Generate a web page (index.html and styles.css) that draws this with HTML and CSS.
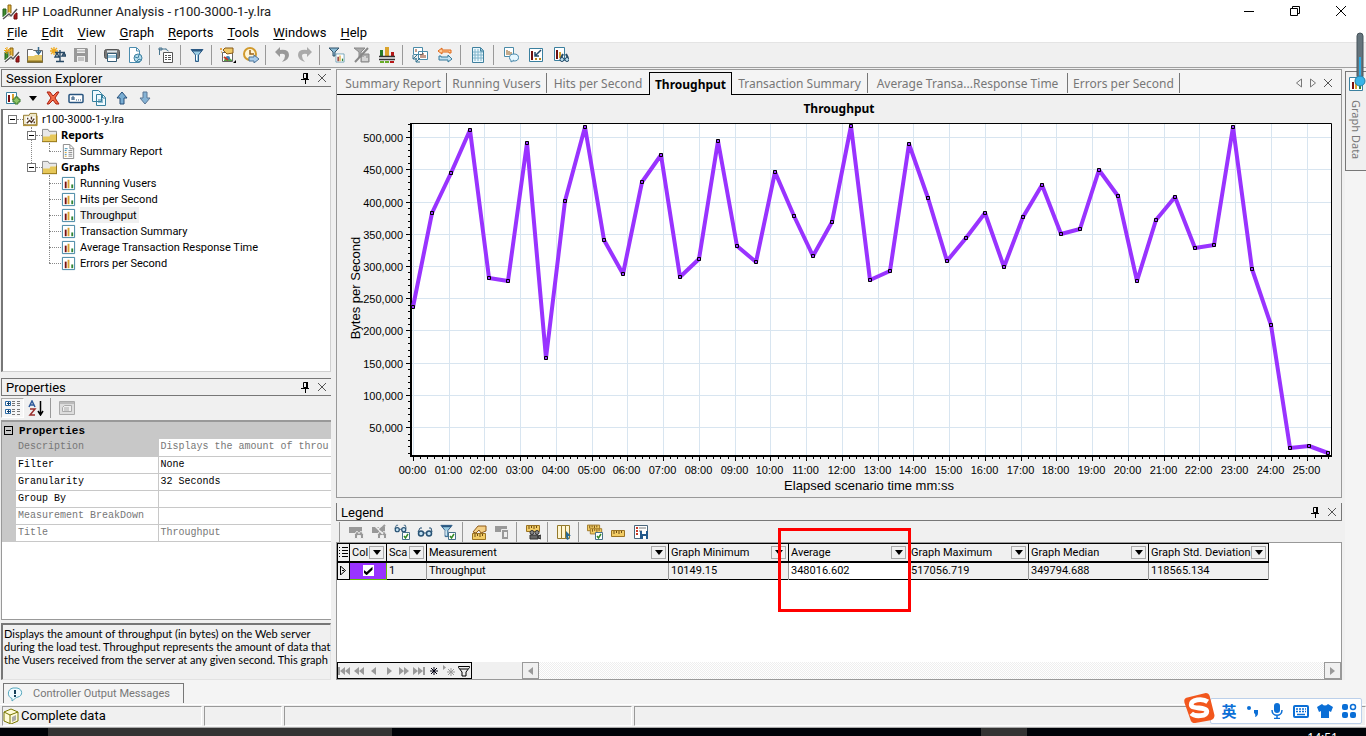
FILE: index.html
```html
<!DOCTYPE html>
<html lang="en">
<head>
<meta charset="utf-8">
<title>HP LoadRunner Analysis - r100-3000-1-y.lra</title>
<link rel="stylesheet" href="styles.css">
</head>
<body>
<svg class="sprite" aria-hidden="true">
  <symbol id="app" viewBox="0 0 16 16"><path d="M1 5h3v8H1z" fill="#3d8b2f" stroke="#225c1a"/><path d="M6 1h3v11H6z" fill="#e5b53a" stroke="#8a6513"/><path d="M12 9h3v6h-3z" fill="#a81b1b" stroke="#6e0c0c"/><path d="M1 15l6-5 2 2 6-7" fill="none" stroke="#fff" stroke-width="3"/><path d="M1 15l6-5 2 2 6-7" fill="none" stroke="#555" stroke-width="1.5"/></symbol>
  <symbol id="newapp" viewBox="0 0 16 16"><use href="#app"/><path d="M3 0v7M0 3.500h7M1 1l5 5M6 1L1 6" stroke="#f0a818"/></symbol>
  <symbol id="open" viewBox="0 0 16 16"><path d="M.5 2.500h5l1 1h9v12H.5z" fill="#fff" stroke="#666"/><path d="M1 9h6l1-1h7v6H1z" fill="#e6c868"/><path d="M0 14.500h16" stroke="#8d7423" stroke-width="2"/><path d="M11.500 0v6M9 4l2.500 3L14 4" fill="none" stroke="#3a6a8c" stroke-width="1.500"/></symbol>
  <symbol id="scale" viewBox="0 0 16 16"><path d="M4 0v8M0 4h8M1 1l6 6M7 1L1 7" stroke="#efaa20" stroke-width="1.300"/><path d="M10 3v11M5 5.500h10M6 14.500h8M7 6l-2 4h4zM14 6l-2 3h4z" fill="none" stroke="#294a66" stroke-width="1.400"/></symbol>
  <symbol id="save" viewBox="0 0 16 16"><path d="M1 1h13l1 1v13H1z" fill="#999"/><path d="M4 2h8v4H4zM4 9h8v6H4z" fill="#eee"/><path d="M5 11h6M5 13h6M4 4h8" stroke="#999"/></symbol>
  <symbol id="print" viewBox="0 0 16 16"><rect x=".5" y="2.500" width="15" height="9" rx="2" fill="#777" stroke="#555"/><path d="M3.500 6.500h9v8h-9z" fill="#fff" stroke="#355c75"/><path d="M3 4.500h10" stroke="#dfe8ee" stroke-width="2"/><path d="M4 8h8v3H4z" fill="#9cc5da"/></symbol>
  <symbol id="docweb" viewBox="0 0 16 16"><path d="M2.500.500h7l3 3v12h-10z" fill="#fff" stroke="#4b8cae"/><path d="M9.500 1v3h3" fill="none" stroke="#4b8cae"/><circle cx="11" cy="11" r="4" fill="#b5dded" stroke="#3c7f9f"/><path d="M8 10l3 1 1-3M10 14l2-2 2 1" fill="none" stroke="#3c7f9f"/></symbol>
  <symbol id="copylist" viewBox="0 0 16 16"><path d="M1.500 8V2h7M1 1h3v2H1zM7.500 2l3 2" fill="none" stroke="#4a7790"/><path d="M5.500 5.500h9v10h-9z" fill="#fff" stroke="#555"/><path d="M7 8.500h2M7 10.500h2M7 12.500h2M10 8.500h3M10 10.500h3M10 12.500h3" stroke="#555"/></symbol>
  <symbol id="funnel" viewBox="0 0 16 16"><path d="M2 2.500h12L9.500 8v6.500h-3V8z" fill="#9acbe2" stroke="#2e5d88"/><path d="M3 3.500h10" stroke="#2a5780" stroke-width="2"/><path d="M7.500 8v5" stroke="#fff"/></symbol>
  <symbol id="pic" viewBox="0 0 16 16"><path d="M2.500 5.500h10v9h-10z" fill="#fff" stroke="#666"/><path d="M4 13l3-4 5 4v1H4z" fill="#53a447"/><circle cx="8" cy="11" r="2" fill="#397dba"/><path d="M4 10l4 3" stroke="#c73524" stroke-width="2"/><path d="M3 3l2-2h8v5L7 7z" fill="#efc969" stroke="#875915"/><path d="M1 1v2M0 2h2M1 5h1" stroke="#e0921e"/><path d="M16 13v3h-3z"/></symbol>
  <symbol id="clock" viewBox="0 0 16 16"><circle cx="7" cy="7" r="6" fill="#fff6d8" stroke="#d19a2d" stroke-width="2"/><path d="M7 3v4h4" fill="none" stroke="#9c641a" stroke-width="1.500"/><path d="M6 10h5V8l5 4-5 4v-2H6z" fill="#a9cdec" stroke="#4d7499"/></symbol>
  <symbol id="undo" viewBox="0 0 16 16"><path d="M6 0L1 5l5 5V7q5-1 5 2 0 3-3 6 7-2 7-7 0-6-9-5z" fill="#999"/></symbol>
  <symbol id="redo" viewBox="0 0 16 16"><path d="M10 0l5 5-5 5V7Q5 6 5 9q0 3 3 6-7-2-7-7 0-6 9-5z" fill="#aaa"/></symbol>
  <symbol id="chart" viewBox="0 0 16 16"><path d="M1.500 1.500h13v13h-13z" fill="#fff" stroke="#3b809f"/><path d="M4 6h2v7H4z" fill="#7b1010"/><path d="M7 4h2v9H7z" fill="#d9a231"/><path d="M11 9h2v4h-2z" fill="#308437"/></symbol>
  <symbol id="fchart" viewBox="0 0 16 16"><path d="M0 1h10L6 5v4H4V5z" fill="#8bbbd5" stroke="#31536b"/><use href="#chart" x="6" y="6" width="10" height="10"/></symbol>
  <symbol id="fclear" viewBox="0 0 16 16"><path d="M0 1h11L7 5v5H5V5zM7 7h8v8H7z" fill="#aaa" stroke="#888"/><path d="M9 10v4M11 9v5M13 11v3" stroke="#fff"/><path d="M1 15L14 1" stroke="#888" stroke-width="2"/></symbol>
  <symbol id="bars" viewBox="0 0 16 16"><path d="M1 3h3v6H1z" fill="#287b24"/><path d="M6 0h4v9H6z" fill="#dba42c"/><path d="M12 5h3v4h-3z" fill="#b61818"/><path d="M0 9.500h16M0 12.500h16" stroke="#333" stroke-width="1.500"/><path d="M1 14h4v2H1zM6 14h4v2H6z" fill="#68ad28"/><path d="M11 14h4v2h-4z" fill="#b61818"/></symbol>
  <symbol id="drill" viewBox="0 0 16 16"><path d="M1.500.500h9v7h-9zM6.500 4.500h9v8h-9z" fill="#fff" stroke="#4a8ba8"/><path d="M9 11V7M11 11V6M13 11V8M4 5V2" stroke="#8a3a18"/><path d="M1 8v4h4M1 12l4-4M8 15H4v-4M8 11l-4 4" stroke="#33738f" fill="none"/></symbol>
  <symbol id="swap" viewBox="0 0 16 16"><path d="M14 6V3H5V1L1 4l4 3V5h7v1z" fill="#ffc995" stroke="#df6818"/><path d="M2 9v4h9v2l4-3-4-4v2H4V9z" fill="#c1e0f1" stroke="#367b9c"/></symbol>
  <symbol id="gridpage" viewBox="0 0 16 16"><path d="M2.500.500h8l3 3v12h-11z" fill="#e9f7fd" stroke="#3f809e"/><path d="M3 5h10M3 8h10M3 11h10M5 2v12M8 2v12M11 4v10" stroke="#80b4ca"/><path d="M10.500 1v3h3" fill="#9cc8db" stroke="#3f809e"/></symbol>
  <symbol id="comment" viewBox="0 0 16 16"><path d="M1.500.500h9v9h-9z" fill="#fff" stroke="#4a8ba8"/><path d="M4 8V3M6 8V4M8 8V5" stroke="#8a5618"/><ellipse cx="11" cy="10.500" rx="4.500" ry="3.500" fill="#e6f7ff" stroke="#4b8cae"/><path d="M8 13v2l3-2" fill="#fff" stroke="#4b8cae"/></symbol>
  <symbol id="arrowchart" viewBox="0 0 16 16"><path d="M1.500 1.500h13v13h-13z" fill="#fff" stroke="#3b809f"/><path d="M4 4v9" stroke="#701010" stroke-width="2"/><path d="M13 3L7 9M7 5v4h4" fill="none" stroke="#23496a" stroke-width="1.500"/><path d="M7 12h2M11 12h2" stroke="#b88720" stroke-width="2"/></symbol>
  <symbol id="searchchart" viewBox="0 0 16 16"><path d="M1.500.500h10v13h-10z" fill="#fff" stroke="#3b809f"/><path d="M4 12V3" stroke="#701010" stroke-width="2"/><path d="M7 11V5" stroke="#d4a02a" stroke-width="2"/><path d="M8 11l2-4M15 11l-2-4" stroke="#284c66" stroke-width="2"/><circle cx="9" cy="12.500" r="2" fill="#b8deef" stroke="#234764"/><circle cx="14" cy="12.500" r="2" fill="#b8deef" stroke="#234764"/></symbol>
  <symbol id="addchart" viewBox="0 0 16 16"><path d="M1.500 2.500h10v11h-10z" fill="#fff" stroke="#3b809f"/><path d="M4 5v7" stroke="#7b1010" stroke-width="2"/><path d="M8 4v6" stroke="#d9a231" stroke-width="2"/><path d="M8 9h2V7h3v2h2v3h-2v2h-3v-2H8z" fill="#8fc465" stroke="#39792c"/></symbol>
  <symbol id="delete" viewBox="0 0 16 16"><path d="M2 2h3l3 4 4-4h2l-4 6 4 6h-3l-3-4-4 4H2l4-6z" fill="#f16c47" stroke="#ab1f12"/></symbol>
  <symbol id="rename" viewBox="0 0 16 16"><rect x="1" y="4.500" width="14" height="8" rx="1" fill="#fff" stroke="#28547f" stroke-width="1.500"/><path d="M4 10V7h2v3M4 9h2M8 10h1M10 10h1M12 10h1" stroke="#28547f" fill="none"/></symbol>
  <symbol id="copy" viewBox="0 0 16 16"><path d="M1.500.500h6l3 3v8h-9zM5.500 4.500h6l3 3v8h-9z" fill="#effaff" stroke="#36809e"/><path d="M11.500 5v3h3M7 10h5M7 12h5" fill="none" stroke="#36809e"/></symbol>
  <symbol id="up" viewBox="0 0 16 16"><path d="M8 2L3 8h3v6h4V8h3z" fill="#7aaed3" stroke="#254e7a"/></symbol>
  <symbol id="down" viewBox="0 0 16 16"><path d="M8 14L3 8h3V2h4v6h3z" fill="#86b3d5" stroke="#5a7695"/></symbol>
  <symbol id="pin" viewBox="0 0 10 12"><path d="M3.500 1.500h4v5h-4zM1 7.500h8M5.500 8v4" fill="none" stroke="#000"/><path d="M7 1v6" stroke="#000" stroke-width="2"/></symbol>
  <symbol id="close" viewBox="0 0 10 10"><path d="M1 1l8 8M9 1L1 9" stroke="currentColor" stroke-width="1"/></symbol>
  <symbol id="folder" viewBox="0 0 16 16"><path d="M.5 1.500h6l1 2h8v11H.5z" fill="#e8e8e8" stroke="#888"/><path d="M1 9h7l1-2h6v8H1z" fill="#e6c759"/><path d="M0 14.500h16M15.500 6v9" stroke="#987719"/></symbol>
  <symbol id="session" viewBox="0 0 16 16"><path d="M.5 3.500h6l1-2h7v12H.5z" fill="#eee7c8" stroke="#91772b"/><path d="M3 5h10v8H3z" fill="#fff"/><path d="M4 12l3-3 2 2 3-4M5 6v2M9 5v3M12 10v2" stroke="#523823" stroke-width="1.500" fill="none"/><path d="M0 14.500h15V4" stroke="#a7831f" fill="none"/></symbol>
  <symbol id="report" viewBox="0 0 16 16"><path d="M2.500.500h7l4 4v11h-11z" fill="#fff" stroke="#888"/><path d="M9.500 1v4h4M8 7h4M8 9h4M8 11h4M8 13h4" stroke="#888" fill="none"/><path d="M4 5h3M4 7h2M4 11h2" stroke="#3787ac"/><path d="M4 9h2M4 13h2" stroke="#d8a02a"/></symbol>
  <symbol id="cats" viewBox="0 0 16 16"><path d="M.5 1.500h5v4h-5zM.5 9.500h5v4h-5z" fill="#fff" stroke="#2b6aa5"/><path d="M2 3.500h3M3.500 2v3M2 11.500h3M3.500 10v3" stroke="#123f6a"/><path d="M7 1.500h3M12 1.500h3M7 3.500h3M12 3.500h3M7 5.500h3M12 5.500h3M7 9.500h3M12 9.500h3M7 11.500h3M12 11.500h3M7 14.500h3M12 14.500h3" stroke="#777"/></symbol>
  <symbol id="sort" viewBox="0 0 16 16"><path d="M1 7l3-6 3 6M2 5h4" fill="none" stroke="#2e5a9b" stroke-width="1.500"/><path d="M2 9h5l-5 6h5" fill="none" stroke="#9b302e" stroke-width="1.500"/><path d="M12.500 1v13M10 11l2.500 4 2.500-4" fill="none" stroke="#000" stroke-width="1.500"/></symbol>
  <symbol id="page" viewBox="0 0 16 16"><path d="M.5 1.500h15v13H.5z" fill="#ddd" stroke="#aaa"/><path d="M1 3h14" stroke="#bbb" stroke-width="2"/><path d="M3.500 7.500l2-2h7v6h-9zM5 8h5M5 10h5" fill="#eee" stroke="#aaa"/></symbol>
  <symbol id="gmerge" viewBox="0 0 16 16"><path d="M1 3h13v6H1z" fill="#999"/><path d="M6.500 14.500v-4l2-3h1l1.500 2 1.500-2h1l2 3v4h-3v-3h-3v3z" fill="#999" stroke="#eee"/></symbol>
  <symbol id="gsplit" viewBox="0 0 16 16"><use href="#gmerge"/><path d="M7 5l6-5M2 0l10 10" stroke="#eee" stroke-width="1.500"/><path d="M9 6l5-5" stroke="#999" stroke-width="2"/></symbol>
  <symbol id="glasses" viewBox="0 0 16 16"><path d="M1 8L3 4h2M15 8l-1-4h-2" fill="none" stroke="#285274"/><circle cx="4" cy="9.500" r="2.500" fill="#c5e3f4" stroke="#285274" stroke-width="1.500"/><circle cx="12" cy="9.500" r="2.500" fill="#c5e3f4" stroke="#285274" stroke-width="1.500"/><path d="M6.500 9h3" stroke="#285274"/></symbol>
  <symbol id="ok" viewBox="0 0 8 8"><path d="M.5.500h7v7h-7z" fill="#fff" stroke="#47718a"/><path d="M2 4l1.500 2L6 2" fill="none" stroke="#338a26" stroke-width="1.500"/></symbol>
  <symbol id="glassesok" viewBox="0 0 16 16"><use href="#glasses" x="0" y="-2" width="13" height="13"/><use href="#ok" x="8" y="8" width="8" height="8"/></symbol>
  <symbol id="funnelok" viewBox="0 0 16 16"><use href="#funnel" x="-1" y="-1" width="15" height="15"/><use href="#ok" x="8" y="8" width="8" height="8"/></symbol>
  <symbol id="ruler" viewBox="0 0 16 16"><path d="M1.500 6.500h13v6h-13z" fill="#f2cc65" stroke="#9b7322"/><path d="M4 7v3M6.500 7v2M9 7v3M11.500 7v2" stroke="#6e4c13"/></symbol>
  <symbol id="rulerhand" viewBox="0 0 16 16"><use href="#ruler" y="3" width="16" height="16"/><path d="M2 8l5-6h8v5l-5 2-2-3-3 3z" fill="#f4cf84" stroke="#8e5b1b"/></symbol>
  <symbol id="gcopy" viewBox="0 0 16 16"><path d="M1 2h12v6H1z" fill="#999"/><path d="M7.500 5.500h7v10h-7z" fill="#999" stroke="#eee"/><path d="M10 8h3v5h-3z" fill="#eee"/></symbol>
  <symbol id="rulercam" viewBox="0 0 16 16"><use href="#ruler" y="-5" width="16" height="16"/><circle cx="7" cy="8.500" r="2" fill="#888" stroke="#333"/><circle cx="12" cy="8.500" r="2" fill="#888" stroke="#333"/><path d="M5 11h8v4H5zM13 12l3-1v4l-3-1z" fill="#666" stroke="#333"/></symbol>
  <symbol id="columns" viewBox="0 0 16 16"><path d="M1.500 1.500h4v13h-4zM5.500 1.500h4v13h-4zM9.500 1.500h4v13h-4z" fill="#fff6d1" stroke="#94792a"/><path d="M10 7l5 5h-3l1 3-2 1-1-3z" fill="#286b95"/></symbol>
  <symbol id="rulersok" viewBox="0 0 16 16"><use href="#ruler" x="-1" y="-5" width="15" height="15"/><use href="#ruler" x="2" y="-1" width="14" height="14"/><use href="#ok" x="8" y="8" width="8" height="8"/></symbol>
  <symbol id="saveset" viewBox="0 0 16 16"><path d="M1.500 1.500h13v13h-13z" fill="#fff" stroke="#4a657b"/><path d="M3 4h2M3 7h2M3 10h2" stroke="#c83824" stroke-width="2"/><path d="M6 4h7M6 7h3" stroke="#777"/><path d="M7 7h8v8H7z" fill="#24598b"/><path d="M9 7h4v3H9zM10 12h3v3h-3z" fill="#fff"/></symbol>
  <symbol id="cube" viewBox="0 0 16 16"><path d="M1 4l7-3 7 3v9l-7 3-7-3z" fill="#fffbd8" stroke="#777600"/><path d="M1 4l6 3v8M7 7l8-3" fill="none" stroke="#777600"/><path d="M9 9l4-2v5l-4 2z" fill="#aaa"/></symbol>
  <symbol id="bubble" viewBox="0 0 16 16"><path d="M5 12.500C0 11 0 3 6 2h4c6 1 6 8 1 9-3 1-2 1-6 4z" fill="#eefaff" stroke="#56a7bd"/><path d="M8 4v4M8 9v2" stroke="#143f5a" stroke-width="2"/></symbol>
</svg>

<header class="titlebar">
  <svg class="ico"><use href="#app"/></svg>
  <h1>HP LoadRunner Analysis - r100-3000-1-y.lra</h1>
  <div class="winbtns">
    <button aria-label="Minimize"><svg width="12" height="12"><path d="M1 6.500h10" stroke="#000"/></svg></button>
    <button aria-label="Restore"><svg width="12" height="12"><path d="M1.500 3.500h7v7h-7zM3.500 3V1.500h7v7H9" fill="none" stroke="#000"/></svg></button>
    <button aria-label="Close"><svg width="12" height="12"><path d="M1 1l10 10M11 1L1 11" stroke="#000"/></svg></button>
  </div>
</header>
<nav class="menubar">
  <button><u>F</u>ile</button><button><u>E</u>dit</button><button><u>V</u>iew</button><button><u>G</u>raph</button><button><u>R</u>eports</button><button><u>T</u>ools</button><button><u>W</u>indows</button><button><u>H</u>elp</button>
</nav>
<div class="toolbar main-tools" role="toolbar">
  <button aria-label="New session"><svg class="ico"><use href="#newapp"/></svg></button>
  <button aria-label="Open"><svg class="ico"><use href="#open"/></svg></button>
  <button aria-label="Cross result"><svg class="ico"><use href="#scale"/></svg></button>
  <button aria-label="Save"><svg class="ico"><use href="#save"/></svg></button><i></i>
  <button aria-label="Print"><svg class="ico"><use href="#print"/></svg></button>
  <button aria-label="HTML report"><svg class="ico"><use href="#docweb"/></svg></button><i></i>
  <button aria-label="Run-time settings"><svg class="ico"><use href="#copylist"/></svg></button><i></i>
  <button aria-label="Global filter"><svg class="ico"><use href="#funnel"/></svg></button><i></i>
  <button aria-label="Templates"><svg class="ico"><use href="#pic"/></svg></button>
  <button aria-label="Time"><svg class="ico"><use href="#clock"/></svg></button><i></i>
  <button aria-label="Undo"><svg class="ico"><use href="#undo"/></svg></button>
  <button aria-label="Redo"><svg class="ico"><use href="#redo"/></svg></button><i></i>
  <div class="wide">
  <button aria-label="Filter graph"><svg class="ico"><use href="#fchart"/></svg></button>
  <button aria-label="Clear filter"><svg class="ico"><use href="#fclear"/></svg></button>
  <button aria-label="Granularity"><svg class="ico"><use href="#bars"/></svg></button><i></i>
  <button aria-label="Merge graphs"><svg class="ico"><use href="#drill"/></svg></button>
  <button aria-label="Auto correlate"><svg class="ico"><use href="#swap"/></svg></button><i></i>
  <button aria-label="Raw data"><svg class="ico"><use href="#gridpage"/></svg></button><i></i>
  <button aria-label="Comment"><svg class="ico"><use href="#comment"/></svg></button>
  <button aria-label="Arrow"><svg class="ico"><use href="#arrowchart"/></svg></button>
  <button aria-label="Find in graph"><svg class="ico"><use href="#searchchart"/></svg></button>
  </div>
</div>

<main class="workspace">
  <aside class="left">
    <section class="explorer">
      <div class="panel-head"><h2>Session Explorer</h2><button aria-label="Pin explorer"><svg class="pin"><use href="#pin"/></svg></button><button aria-label="Close explorer"><svg class="x"><use href="#close"/></svg></button></div>
      <div class="toolbar side-tools" role="toolbar">
        <button aria-label="Add graph"><svg class="ico"><use href="#addchart"/></svg></button>
        <button class="drop" aria-label="Add options"></button>
        <button aria-label="Delete"><svg class="ico"><use href="#delete"/></svg></button>
        <button aria-label="Rename"><svg class="ico"><use href="#rename"/></svg></button>
        <button aria-label="Duplicate"><svg class="ico"><use href="#copy"/></svg></button>
        <button aria-label="Move up"><svg class="ico"><use href="#up"/></svg></button>
        <button aria-label="Move down"><svg class="ico"><use href="#down"/></svg></button>
      </div>
      <div class="tree">
        <div class="node"><button class="box" aria-label="Collapse session"></button><s></s><svg class="ico"><use href="#session"/></svg><span>r100-3000-1-y.lra</span></div>
        <ul class="l1">
          <li>
            <div class="node"><button class="box" aria-label="Collapse reports"></button><s></s><svg class="ico"><use href="#folder"/></svg><b>Reports</b></div>
            <ul class="l2"><li class="node"><s></s><svg class="ico"><use href="#report"/></svg><span>Summary Report</span></li></ul>
          </li>
          <li>
            <div class="node"><button class="box" aria-label="Collapse graphs"></button><s></s><svg class="ico"><use href="#folder"/></svg><b>Graphs</b></div>
            <ul class="l2">
              <li class="node"><s></s><svg class="ico"><use href="#chart"/></svg><span>Running Vusers</span></li>
              <li class="node"><s></s><svg class="ico"><use href="#chart"/></svg><span>Hits per Second</span></li>
              <li class="node"><s></s><svg class="ico"><use href="#chart"/></svg><span class="sel">Throughput</span></li>
              <li class="node"><s></s><svg class="ico"><use href="#chart"/></svg><span>Transaction Summary</span></li>
              <li class="node"><s></s><svg class="ico"><use href="#chart"/></svg><span>Average Transaction Response Time</span></li>
              <li class="node"><s></s><svg class="ico"><use href="#chart"/></svg><span>Errors per Second</span></li>
            </ul>
          </li>
        </ul>
      </div>
    </section>
    <section class="props">
      <div class="panel-head"><h2>Properties</h2><button aria-label="Pin properties"><svg class="pin"><use href="#pin"/></svg></button><button aria-label="Close properties"><svg class="x"><use href="#close"/></svg></button></div>
      <div class="toolbar side-tools prop-tools" role="toolbar">
        <button class="on" aria-label="Categorized"><svg class="ico"><use href="#cats"/></svg></button>
        <button aria-label="Alphabetical"><svg class="ico"><use href="#sort"/></svg></button><i></i>
        <button aria-label="Property pages"><svg class="ico"><use href="#page"/></svg></button>
      </div>
      <div class="prop-grid">
        <div class="cat"><button class="box" aria-label="Collapse category"></button>Properties</div>
        <table>
          <tr class="ro cur"><th>Description</th><td>Displays the amount of throu</td></tr>
          <tr><th>Filter</th><td>None</td></tr>
          <tr><th>Granularity</th><td>32 Seconds</td></tr>
          <tr><th>Group By</th><td></td></tr>
          <tr class="ro"><th>Measurement BreakDown</th><td></td></tr>
          <tr class="ro"><th>Title</th><td>Throughput</td></tr>
        </table>
      </div>
    </section>
    <p class="desc">Displays the amount of throughput (in bytes) on the Web server<br>during the load test. Throughput represents the amount of data that<br>the Vusers received from the server at any given second. This graph</p>
  </aside>

  <div class="center">
    <section class="graph">
      <div class="tabs">
        <button class="t1">Summary Report</button><button class="t2">Running Vusers</button><button class="t3">Hits per Second</button><button class="t4 active">Throughput</button><button class="t5">Transaction Summary</button><button class="t6">Average Transa...Response Time</button><button class="t7">Errors per Second</button>
        <div class="tabnav">
          <button aria-label="Previous tab"><svg width="8" height="10"><path d="M6.500 1v8l-5-4z" fill="none" stroke="#777"/></svg></button>
          <button aria-label="Next tab"><svg width="8" height="10"><path d="M1.500 1v8l5-4z" fill="none" stroke="#777"/></svg></button>
          <button aria-label="Close tab"><svg class="x"><use href="#close"/></svg></button>
        </div>
      </div>
      <svg id="plot" class="plot" viewBox="0 0 1004 402" role="img" aria-label="Throughput"></svg>
    </section>

    <section class="legend">
      <div class="panel-head"><h2>Legend</h2><button aria-label="Pin legend"><svg class="pin"><use href="#pin"/></svg></button><button aria-label="Close legend"><svg class="x"><use href="#close"/></svg></button></div>
      <div class="toolbar legend-tools" role="toolbar"><i></i>
        <button aria-label="Show"><svg class="ico"><use href="#gmerge"/></svg></button>
        <button aria-label="Hide"><svg class="ico"><use href="#gsplit"/></svg></button>
        <button aria-label="Show selected"><svg class="ico"><use href="#glassesok"/></svg></button>
        <button aria-label="View"><svg class="ico"><use href="#glasses"/></svg></button>
        <button aria-label="Filter selected"><svg class="ico"><use href="#funnelok"/></svg></button><i></i>
        <button aria-label="Configure measurements"><svg class="ico"><use href="#rulerhand"/></svg></button>
        <button aria-label="Copy"><svg class="ico"><use href="#gcopy"/></svg></button><i></i>
        <button aria-label="Animate"><svg class="ico"><use href="#rulercam"/></svg></button><i></i>
        <button aria-label="Columns"><svg class="ico"><use href="#columns"/></svg></button><i></i>
        <button aria-label="Select measurements"><svg class="ico"><use href="#rulersok"/></svg></button>
        <button aria-label="Measurement"><svg class="ico"><use href="#ruler"/></svg></button>
        <button aria-label="Save settings"><svg class="ico"><use href="#saveset"/></svg></button>
      </div>
      <div class="grid">
        <table>
          <colgroup><col class="c0"><col class="c1"><col class="c2"><col class="c3"><col class="cn"><col class="cn"><col class="cn"><col class="cn"><col class="cn"></colgroup>
          <thead><tr>
            <th><svg width="9" height="12"><path d="M0 1.500h1M3 1.500h6M0 4.500h1M3 4.500h6M0 7.500h1M3 7.500h6M0 10.500h1M3 10.500h6" stroke="#000"/></svg></th>
            <th><div><span>Col</span><button class="drop" aria-label="Filter color"></button></div></th>
            <th><div><span>Sca</span><button class="drop" aria-label="Filter scale"></button></div></th>
            <th><div><span>Measurement</span><button class="drop" aria-label="Filter measurement"></button></div></th>
            <th><div><span>Graph Minimum</span><button class="drop" aria-label="Filter minimum"></button></div></th>
            <th><div><span>Average</span><button class="drop" aria-label="Filter average"></button></div></th>
            <th><div><span>Graph Maximum</span><button class="drop" aria-label="Filter maximum"></button></div></th>
            <th><div><span>Graph Median</span><button class="drop" aria-label="Filter median"></button></div></th>
            <th><div><span>Graph Std. Deviation</span><button class="drop" aria-label="Filter deviation"></button></div></th>
          </tr></thead>
          <tbody><tr>
            <td><svg width="8" height="9"><path d="M1.500 0v9l5-4.500zM3 4.500h2" fill="none" stroke="#000"/></svg></td>
            <td class="color"><input type="checkbox" checked aria-label="Show Throughput"></td>
            <td>1</td><td>Throughput</td><td>10149.15</td><td class="hot">348016.602</td><td>517056.719</td><td>349794.688</td><td>118565.134</td>
          </tr></tbody>
        </table>
        <div class="mark"></div>
        <div class="gridfoot">
          <div class="recnav">
            <button aria-label="First"><svg viewBox="0 0 12 12"><path d="M1 2v8" stroke="#999" stroke-width="2"/><path d="M7 2v8L2 6zM12 2v8L7 6z" fill="#999"/></svg></button>
            <button aria-label="Page back"><svg viewBox="0 0 12 12"><path d="M6 2v8L1 6zM11 2v8L6 6z" fill="#999"/></svg></button>
            <button aria-label="Previous"><svg viewBox="0 0 12 12"><path d="M8 2v8L3 6z" fill="#999"/></svg></button>
            <button aria-label="Next"><svg viewBox="0 0 12 12"><path d="M4 2v8l5-4z" fill="#999"/></svg></button>
            <button aria-label="Page forward"><svg viewBox="0 0 12 12"><path d="M1 2v8l5-4zM6 2v8l5-4z" fill="#999"/></svg></button>
            <button aria-label="Last"><svg viewBox="0 0 12 12"><path d="M11 2v8" stroke="#999" stroke-width="2"/><path d="M0 2v8l5-4zM5 2v8l5-4z" fill="#999"/></svg></button>
            <button aria-label="Set bookmark"><svg viewBox="0 0 12 12"><path d="M6 2v8M2 6h8M3 3l6 6M9 3L3 9" stroke="#001"/></svg></button>
            <button aria-label="Go to bookmark"><svg viewBox="0 0 12 12"><path d="M0 0v5l3-2.500z" fill="#999"/><path d="M8 3v8M4 7h8M5 4l6 6M11 4l-6 6" stroke="#999"/></svg></button>
            <button aria-label="Filter records"><svg viewBox="0 0 12 12"><path d="M.5 1.500h11v1L8 7v4H4V7L.5 2.500zM2 4h8" fill="none" stroke="#000"/></svg></button>
          </div>
          <div class="hscroll"><button aria-label="Scroll left"><svg width="7" height="10"><path d="M6 1v8L1 5z" fill="#999"/></svg></button><button aria-label="Scroll right"><svg width="7" height="10"><path d="M1 1v8l5-4z" fill="#999"/></svg></button></div>
        </div>
      </div>
    </section>
  </div>
  <aside class="rail"><button class="vtab"><svg class="ico"><use href="#chart"/></svg><span>Graph Data</span></button></aside>
</main>

<div class="output"><button><svg class="ico"><use href="#bubble"/></svg><span>Controller Output Messages</span></button></div>
<footer class="status"><div class="s1"><svg class="ico"><use href="#cube"/></svg><span>Complete data</span></div><div class="s2"></div><div class="s3"></div><div class="s4"></div></footer>
<div class="taskbar"><div class="task-search"></div><div class="task-item"></div><time>14:51</time></div>

<svg class="thermo" viewBox="0 0 12 56" aria-hidden="true"><rect x="3" y="1" width="6" height="46" rx="3" fill="#65747c" stroke="#46535a"/><path d="M6 25v20" stroke="#2ea9e0" stroke-width="2"/><circle cx="6" cy="49" r="5" fill="#38b4e8" stroke="#277fa6"/></svg>
<div class="ime">
  <svg class="logo" viewBox="0 0 32 32" aria-hidden="true"><path d="M3 5L23 0q3 0 4 3l5 20q0 4-4 5L12 31q-4 0-5-4L1 10Q0 6 3 5z" fill="#f2571d"/><path d="M25 9C19 5 8 7 8 12s16 2 16 7-12 6-16 2" fill="none" stroke="#fff" stroke-width="5"/></svg>
  <button class="lang">英</button>
  <button aria-label="Punctuation"><svg viewBox="0 0 16 16"><circle cx="4" cy="5" r="2"/><path d="M9 7h4v3q0 3-3 4 1-3-1-4z"/></svg></button>
  <button aria-label="Voice"><svg viewBox="0 0 16 16"><rect x="5" y="0" width="6" height="10" rx="3"/><path d="M3 7c0 7 10 7 10 0M8 12v4M5 15.500h6" fill="none" stroke="#0b6fd6" stroke-width="1.500"/></svg></button>
  <button aria-label="Keyboard"><svg viewBox="0 0 16 16"><rect x="1" y="3" width="14" height="11" rx="1" fill="#fff" stroke="#0b6fd6" stroke-width="2"/><path d="M3 6h10M3 8.500h10" stroke="#0b6fd6" stroke-width="1.500" stroke-dasharray="2 1"/><path d="M4 11.500h8" stroke="#0b6fd6" stroke-width="1.500"/></svg></button>
  <button aria-label="Skin"><svg viewBox="0 0 16 16"><path d="M5 1q3 3 6 0l5 3-2 5-2-1v7H4V8L2 9 0 4z"/></svg></button>
  <button aria-label="Toolbox"><svg viewBox="0 0 16 16"><rect x="1" y="1" width="6" height="6" rx="2"/><circle cx="12" cy="4" r="2.500" fill="none" stroke="#0b6fd6" stroke-width="1.500"/><rect x="1" y="9" width="6" height="6" rx="2"/><rect x="9" y="9" width="6" height="6" rx="2"/></svg></button>
</div>
<script src="chart.js"></script>
</body>
</html>
```
FILE: styles.css
```css
* { box-sizing: border-box; }
body { margin: 0; height: 100vh; display: flex; flex-direction: column; overflow: hidden; background: #f0f0f0; color: #000; font: 11px/16px Roboto, Arial, sans-serif; }
button { font: inherit; color: inherit; background: none; border: 0; padding: 0; margin: 0; flex: none; }
h1, h2, p, ul { margin: 0; padding: 0; font-weight: normal; list-style: none; }
svg { display: block; flex: none; }
.sprite { position: absolute; width: 0; height: 0; }
.ico { width: 16px; height: 16px; overflow: visible; }

.titlebar { flex: none; height: 23px; display: flex; align-items: center; gap: 4px; padding: 0 2px; background: #fff; }
.titlebar h1 { flex: 1; font: 13px/20px Roboto, sans-serif; color: #222; }
.winbtns { display: flex; height: 22px; }
.winbtns button { width: 46px; height: 20px; display: grid; place-items: center; }
.menubar { flex: none; height: 19px; display: flex; gap: 14px; padding-left: 7px; background: #fff; font: 13px/18px Roboto, sans-serif; }
.menubar u { text-underline-offset: 2px; }

.toolbar { flex: none; display: flex; align-items: center; }
.toolbar button { width: 23px; height: 20px; display: grid; place-items: center; }
.toolbar i { flex: none; width: 1px; height: 20px; margin: 0 4px 0 3px; background: #999; }
.main-tools { height: 26px; border-top: 1px solid #e4e4e4; border-bottom: 1px solid #a0a0a0; }
.wide { display: flex; align-items: center; }
.wide button { width: 25px; }

.workspace { flex: 1; min-height: 0; display: flex; gap: 5px; }
.left { width: 331px; flex: none; padding: 1px 0 0 1px; display: flex; flex-direction: column; }
.panel-head { flex: none; height: 18px; display: flex; align-items: center; border: 1px solid #777; border-right: 0; padding: 0 4px; gap: 7px; }
.panel-head h2 { flex: 1; font: 13px/16px Roboto, sans-serif; padding-top: 2px; }
.pin { width: 10px; height: 12px; }
.x { width: 10px; height: 10px; color: #555; }
.side-tools { height: 22px; }
.drop::before { content: ""; border: 4px solid transparent; border-top: 5px solid #000; border-bottom: 0; }
.side-tools .drop { width: 17px; }
.tree { height: 263px; padding: 1px 0 0 5px; background: #fff; border: 1px solid #d0d0d0; border-top-color: #777; border-left: 2px solid #777; }
.node { display: flex; align-items: center; height: 16px; white-space: nowrap; }
.node s { width: 6px; border-top: 1px dotted #888; }
.node span, .node b { margin-left: 4px; }
.node b { font-family: "Noto Sans", sans-serif; }
.node span { padding: 1px 2px 0 0; line-height: 15px; }
.node .sel { background: #f0f0f0; }
.box { width: 9px; height: 9px; border: 1px solid #777; background: linear-gradient(#000, #000) center / 5px 1px no-repeat #fff; }
.node .ico { width: 15px; height: 15px; }
.l1 { position: relative; margin-left: 19px; }
.l1::before { content: ""; position: absolute; left: 4px; top: 0; height: 36px; border-left: 1px dotted #888; }
.l1 > li, .box { position: relative; }
.l2 { position: relative; padding-left: 22px; }
.l2::before { content: ""; position: absolute; left: 22px; top: 0; bottom: 8px; border-left: 1px dotted #888; }
.l2 s { width: 12px; }

.props { flex: 1; display: flex; flex-direction: column; margin-top: 6px; }
.prop-tools { height: 24px; }
.prop-tools .on { border: 1px solid #aaa; border-right-color: #fff; border-bottom-color: #fff; background: #f6f6f6; }
.prop-grid { flex: 1; border: 1px solid #999; border-top-width: 2px; border-right: 0; background: #fff; font: 10px/16px "Liberation Mono", monospace; overflow: hidden; }
.cat { height: 17px; display: flex; align-items: center; gap: 6px; padding-left: 2px; background: #c8c8c8; font-size: 11px; font-weight: bold; }
.cat .box { background-color: transparent; border-color: #000; }
.prop-grid table { width: 100%; table-layout: fixed; border-collapse: collapse; }
.prop-grid tr { height: 17px; }
.prop-grid th, .prop-grid td { padding: 0 2px; font-weight: normal; text-align: left; white-space: nowrap; border-bottom: 1px solid #c8c8c8; line-height: 14px; }
.prop-grid th { width: 149px; border-left: 14px solid #c8c8c8; border-right: 1px solid #c8c8c8; }
.prop-grid .ro { color: #777; }
.prop-grid .cur th { background: #c8c8c8; }
.desc { flex: none; height: 57px; margin-top: 3px; padding: 2px 1px; border: 1px solid #e2e2e2; border-top: 2px solid #777; border-left: 2px solid #777; font: 11px/13px Lato, sans-serif; white-space: nowrap; }

.center { flex: 1; min-width: 0; padding-top: 1px; display: flex; flex-direction: column; gap: 5px; }
.graph { flex: none; border: 1px solid #999; }
.tabs { height: 25px; display: flex; align-items: flex-end; padding: 0 8px 0 3px; background: #f4f4f4; border-bottom: 1px solid #000; font: 12px/18px "Noto Sans", sans-serif; color: #777; }
.tabs > button { height: 20px; padding-top: 2px; border-right: 1px solid #777; white-space: nowrap; margin-bottom: 1px; }
.tabs > .active { height: 23px; margin-bottom: -1px; border: 1px solid #000; border-bottom: 0; background: #f0f0f0; color: #000; font-weight: bold; }
.tabs > .t3 { border-right: 0; }
.t1 { width: 107px; } .t2 { width: 100px; } .t3 { width: 102px; } .t4 { width: 83px; } .t5 { width: 136px; } .t6 { width: 200px; } .t7 { width: 112px; }
.tabnav { flex: 1; display: flex; justify-content: flex-end; align-items: center; gap: 6px; height: 23px; }
.plot { width: 100%; height: auto; font: 11px "Liberation Sans", Arial, sans-serif; }
.plot .title { font: bold 12px "Noto Sans", sans-serif; }
.plot .axis { font: 13px "Liberation Sans", sans-serif; }
.plot .grid-lines { stroke: #d8e5f0; fill: none; }
.plot .ticks { stroke: #000; fill: none; }
.plot .series { stroke: #9933ff; stroke-width: 4; fill: none; stroke-linejoin: round; }
.plot .points { stroke: #000; fill: #9933ff; }
.plot .frame { stroke: #000; stroke-width: 2; fill: none; }
.plot .edge { stroke: #000; fill: none; }

.legend { flex: 1; min-height: 0; display: flex; flex-direction: column; }
.legend .panel-head { border-top: 0; border-right: 1px solid #777; }
.legend-tools { height: 21px; }
.grid { flex: 1; position: relative; display: flex; flex-direction: column; justify-content: space-between; background: #fff; border: 1px solid #999; }
.grid table { width: 931px; table-layout: fixed; border-collapse: collapse; background: #f0f0f0; border: 1px solid #000; }
.c0 { width: 12px; } .c1 { width: 37px; } .c2 { width: 40px; } .c3 { width: 242px; } .cn { width: 120px; }
.grid th, .grid td { height: 18px; padding: 0 2px; text-align: left; font-weight: normal; line-height: 14px; white-space: nowrap; }
.grid th { border: 1px solid #000; border-bottom-width: 2px; }
.grid td { border-right: 1px solid #999; padding-top: 1px; }
.grid th:first-child, .grid td:first-child { padding: 0 1px; border-right: 1px solid #000; }
.grid th div { display: flex; align-items: center; }
.grid th span { flex: 1; min-width: 0; padding-top: 1px; }
.grid .drop { width: 15px; height: 13px; border: 1px solid #aaa; display: grid; place-items: center; }
.grid .color { background: #9933ff; border: 1px solid #6b0; padding: 0 2px; }
.grid .hot { background: #fff; }
input[type=checkbox] { appearance: none; display: block; margin: 0 auto; width: 11px; height: 11px; background: #fff; }
input[type=checkbox]::after { content: ""; display: block; width: 9px; height: 9px; margin: 1px; background: #000; clip-path: polygon(0 40%, 35% 65%, 100% 5%, 100% 40%, 35% 100%, 0 70%); }
.mark { position: absolute; left: 441px; top: -15px; width: 133px; height: 84px; border: 3px solid #f00; }
.gridfoot { display: flex; align-items: stretch; height: 17px; background: #f0f0f0; }
.recnav { width: 135px; display: flex; border: 1px solid #000; margin-right: 50px; }
.recnav button { width: 15px; padding-right: 3px; display: grid; place-items: center; }
.recnav svg { width: 12px; height: 12px; }
.hscroll { flex: 1; display: flex; justify-content: space-between; background: repeating-conic-gradient(#fff 0 25%, #eee 0 50%) 0 0 / 2px 2px; }
.hscroll button { width: 17px; border: 1px solid #999; background: #f0f0f0; display: grid; place-items: center; }

.rail { width: 21px; flex: none; margin-left: -2px; padding-top: 3px; background: #f4f4f4; }
.vtab { width: 100%; height: 100px; display: flex; flex-direction: column; align-items: center; gap: 8px; padding-top: 4px; border: 1px solid #777; border-right: 0; background: #f0f0f0; color: #777; font: 11px/16px "Noto Sans", sans-serif; }
.vtab span { writing-mode: vertical-rl; white-space: nowrap; }

.output { flex: none; height: 25px; padding: 3px 0 0 3px; background: #f4f4f4; border-bottom: 1px solid #fff; }
.output button { width: 181px; height: 20px; display: flex; align-items: center; gap: 10px; padding-left: 3px; border: 1px solid #777; border-bottom: 0; color: #777; font: 11px/16px Roboto, sans-serif; }
.status { flex: none; height: 23px; display: flex; gap: 2px; padding: 1px 0 1px 2px; border-bottom: 1px solid #aaa; font: 13px/18px Roboto, sans-serif; }
.status div { border: 1px solid #999; border-right-color: #fff; border-bottom-color: #fff; display: flex; align-items: center; gap: 2px; }
.s1 { width: 200px; } .s2 { width: 78px; } .s3 { width: 348px; } .s4 { flex: 1; }
.taskbar { flex: none; height: 8px; display: flex; padding-left: 48px; background: #000308; overflow: hidden; color: #fff; }
.task-search { width: 344px; background: #333; }
.task-item { width: 46px; margin-left: 589px; background: #333; }
.taskbar time { margin: 3px 0 0 auto; padding-right: 28px; font: 12px/14px "Noto Sans", sans-serif; }

.thermo { position: absolute; right: 0; top: 32px; width: 12px; height: 56px; }
.ime { position: absolute; right: 4px; bottom: 12px; height: 26px; width: 152px; display: flex; align-items: center; gap: 8px; padding-left: 10px; background: #fff; border: 1px solid #bcd0ea; border-radius: 2px; }
.ime .logo { position: absolute; left: -28px; bottom: -1px; width: 32px; height: 31px; }
.ime button { width: 16px; height: 16px; }
.ime button svg { width: 16px; height: 16px; fill: #0b6fd6; }
.ime .lang { font: bold 15px/16px "Noto Sans CJK SC", sans-serif; color: #0b6fd6; }
```
FILE: chart.js
```js
const NS = "http://www.w3.org/2000/svg";
const plot = document.getElementById("plot");

// Bytes per second, one sample every 32 seconds.
const samples = [
  236500, 382000, 444000, 511000, 281500, 277000, 491000, 157500, 401000, 516000,
  340000, 287500, 430000, 472000, 283000, 311000, 494000, 331000, 306500, 446000,
  378000, 315500, 368500, 517056, 278500, 292500, 489000, 405500, 308000, 343500,
  382500, 299000, 376000, 425500, 349500, 357500, 449000, 409000, 277000, 371500,
  407000, 328000, 332500, 515500, 295500, 208500, 18000, 21000, 10149
];
const left = 76, top_ = 29, right = 994, bottom = 361;
const px = seconds => left + seconds * 35.74 / 60;
const py = value => 364.3 - value * 0.6444 / 1000;

function add(name, attrs, text) {
  const node = document.createElementNS(NS, name);
  for (const key in attrs) node.setAttribute(key, attrs[key]);
  if (text) node.textContent = text;
  plot.append(node);
}

add("rect", { x: 74, y: top_, width: right - 74, height: bottom - top_, fill: "#fff" });
let lines = "", ticks = "";
for (let m = 0; m <= 25; m++) {
  const x = Math.round(px(m * 60)) + 0.5;
  lines += `M${x} ${top_}V${bottom}`;
  ticks += `M${x} ${bottom}v5`;
  add("text", { x: x - 1, y: 379, "text-anchor": "middle" }, String(m).padStart(2, "0") + ":00");
}
for (let s = 12; s < 1540; s += 12) ticks += `M${Math.round(px(s)) + 0.5} ${bottom}v3`;
for (let v = 50000; v <= 500000; v += 50000) {
  const y = Math.round(py(v)) + 0.5;
  lines += `M74 ${y}H${right}`;
  ticks += `M69 ${y}h5`;
  add("text", { x: 66, y: y + 4, "text-anchor": "end" }, v.toLocaleString("en-US"));
}
for (let v = 10000; v <= 520000; v += 10000) ticks += `M71 ${Math.round(py(v)) + 0.5}h3`;
add("path", { d: lines, class: "grid-lines" });
add("path", { d: ticks, class: "ticks" });
add("path", { d: `M74 ${top_ - 0.5}H${right + 0.5}V${bottom}`, class: "edge" });
add("path", { d: `M74 ${top_ - 1}V${bottom}H${right + 1}`, class: "frame" });
const points = samples.map((v, i) => [Math.round(px(i * 32)), Math.round(py(v))]);
add("polyline", { points: points.map(p => p.join()).join(" "), class: "series" });
add("path", { d: points.map(([x, y]) => `M${x - 1.5} ${y - 1.5}h3v3h-3z`).join(""), class: "points" });
add("text", { x: 502, y: 18, "text-anchor": "middle", class: "title" }, "Throughput");
add("text", { x: 532, y: 395, "text-anchor": "middle", class: "axis" }, "Elapsed scenario time mm:ss");
add("text", { x: 0, y: 0, transform: "translate(23 193) rotate(-90)", "text-anchor": "middle", class: "axis" }, "Bytes per Second");
```
